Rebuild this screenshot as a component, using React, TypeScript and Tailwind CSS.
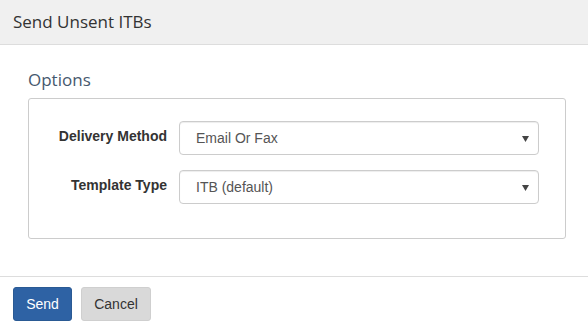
import React from "react";

function Select({ value }: { value: string }) {
  return (
    <div className="relative flex h-[34px] w-[360px] items-center rounded-[4px] border border-[#cccccc] bg-white pl-[16px] text-[14px] text-[#555555] shadow-[inset_0_1px_1px_rgba(0,0,0,0.075)]">
      <span>{value}</span>
      <svg className="absolute right-[9px] top-[14px]" width="7" height="6" viewBox="0 0 7 6">
        <polygon points="0,0 7,0 3.5,6" fill="#444444" />
      </svg>
    </div>
  );
}

export default function App() {
  return (
    <div className="flex h-[327px] w-[588px] flex-col bg-white" style={{ fontFamily: "'Liberation Sans', Arial, sans-serif" }}>
      <div className="flex h-[45px] items-center border-b border-[#dddddd] bg-[#f0f0f0] pl-[13px]">
        <span className="text-[17px] text-[#333333]" style={{ fontFamily: "'Open Sans', 'Noto Sans', sans-serif" }}>Send Unsent ITBs</span>
      </div>
      <div className="flex flex-col pl-[28px] pr-[22px]">
        <div className="flex h-[53px] items-center pt-[17px]">
          <span className="text-[17px] text-[#46586e]" style={{ fontFamily: "'Open Sans', 'Noto Sans', sans-serif" }}>Options</span>
        </div>
        <div className="flex h-[141px] flex-col gap-[15px] rounded-[3px] border border-[#cccccc] pt-[22px]">
          <div className="flex items-center">
            <div className="w-[138px] text-right text-[14px] font-bold text-[#333333] -mt-[4px]">Delivery Method</div>
            <div className="ml-[12px]"><Select value="Email Or Fax" /></div>
          </div>
          <div className="flex items-center">
            <div className="w-[138px] text-right text-[14px] font-bold text-[#333333] -mt-[4px]">Template Type</div>
            <div className="ml-[12px]"><Select value="ITB (default)" /></div>
          </div>
        </div>
      </div>
      <div className="mt-[37px] flex gap-[9px] border-t border-[#dddddd] pl-[13px] pt-[10px]">
        <button className="h-[34px] w-[59px] rounded-[3px] border border-[#2a5a94] bg-[#2e62a4] text-[14px] text-white">Send</button>
        <button className="h-[34px] w-[70px] rounded-[3px] border border-[#cfcfcf] bg-[#d9d9d9] text-[14px] text-[#333333]">Cancel</button>
      </div>
    </div>
  );
}
